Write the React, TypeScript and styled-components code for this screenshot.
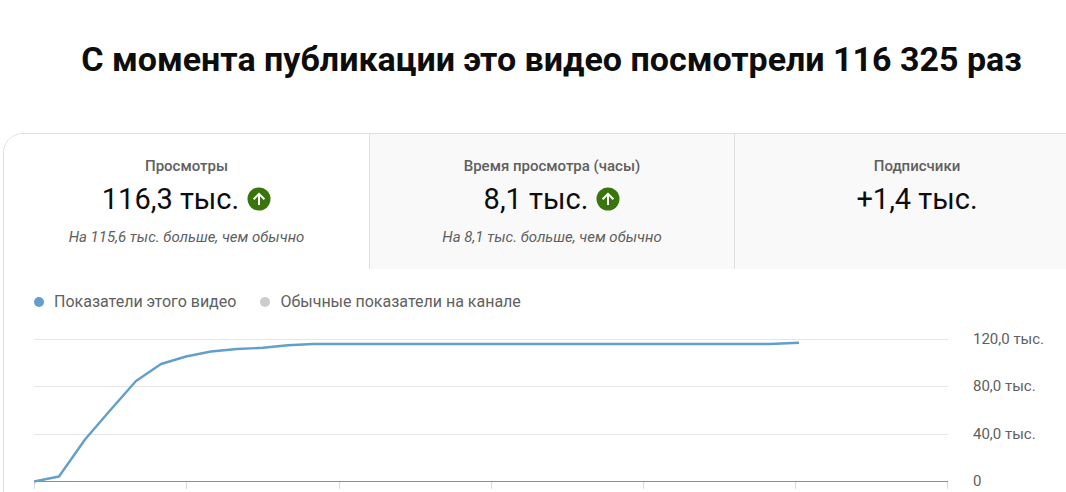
import React, { useState } from "react";
import styled, { createGlobalStyle } from "styled-components";

const GlobalStyle = createGlobalStyle`
  *, *::before, *::after { box-sizing: border-box; }
  body {
    margin: 0;
    background: #fff;
    color: #0d0d0d;
    font-family: Roboto, "Liberation Sans", sans-serif;
  }
`;

const Viewport = styled.main`
  overflow: hidden;
  max-height: 100vh;
`;

/* The report is a little wider than the window and is cut at its right edge. */
const Report = styled.div`
  width: calc(100% + 34px);
  padding-left: 3px;
`;

const Title = styled.h1`
  margin: 0;
  padding: 37px 0 52px;
  font-size: 34px;
  line-height: 44px;
  font-weight: 700;
  text-align: center;
  white-space: nowrap;
`;

const Card = styled.section`
  border: 1px solid #e0e0e0;
  border-radius: 20px;
  overflow: hidden;
`;

const Tabs = styled.div`
  display: grid;
  grid-template-columns: repeat(3, 1fr);
`;

const Tab = styled.button<{ $active: boolean }>`
  display: flex;
  flex-direction: column;
  align-items: center;
  height: 135px;
  margin: 0;
  padding: 22px 0 0;
  border: 0;
  font: inherit;
  color: inherit;
  cursor: pointer;
  background: ${(p) => (p.$active ? "#fff" : "#f9f9f9")};

  & + & {
    border-left: 1px solid #e0e0e0;
  }
`;

const TabLabel = styled.span`
  font-size: 15px;
  line-height: 20px;
  font-weight: 500;
  color: #606060;
`;

const TabValue = styled.span`
  display: flex;
  align-items: center;
  gap: 8px;
  margin-top: 3px;
  font-size: 29px;
  line-height: 40px;
  color: #0d0d0d;
`;

const TabNote = styled.span`
  margin-top: 8px;
  font-size: 15px;
  line-height: 20px;
  font-style: italic;
  color: #606060;
`;

const Legend = styled.ul`
  display: flex;
  gap: 24px;
  margin: 0;
  padding: 23px 30px 0;
  list-style: none;
`;

const LegendItem = styled.li<{ $color: string }>`
  display: flex;
  align-items: center;
  gap: 10px;
  font-size: 16px;
  line-height: 20px;
  color: #606060;

  &::before {
    content: "";
    width: 10px;
    height: 10px;
    border-radius: 50%;
    background: ${(p) => p.$color};
  }
`;

const Chart = styled.div`
  display: grid;
  grid-template-columns: 1fr 126px;
  column-gap: 25px;
  padding: 17px 0 20px 30px;
`;

const Plot = styled.svg`
  display: block;
  width: 100%;
  height: 162px;
`;

const Scale = styled.div`
  display: flex;
  flex-direction: column;
  justify-content: space-between;
  height: 162px;
  font-size: 15px;
  line-height: 20px;
  color: #606060;
`;

const UpIcon = () => (
  <svg width="24" height="24" viewBox="0 0 24 24" aria-hidden="true">
    <circle cx="12" cy="12" r="11.5" fill="#38760c" />
    <path
      d="M12 18V7M6.6 12.2 12 6.8l5.4 5.4"
      fill="none"
      stroke="#fff"
      strokeWidth="2"
    />
  </svg>
);

const tabs = [
  { label: "Просмотры", value: "116,3 тыс.", note: "На 115,6 тыс. больше, чем обычно" },
  { label: "Время просмотра (часы)", value: "8,1 тыс.", note: "На 8,1 тыс. больше, чем обычно" },
  { label: "Подписчики", value: "+1,4 тыс.", note: "" },
];

const gridRows = [10.5, 57.5, 105.5];
const ticks = [0.5, 152.5, 305.5, 457.5, 609.5, 761.5, 913.5];
const viewsLine =
  "0,152.5 25,147.5 51,110.5 76,81.5 102,52 127,35 152,27.5 177,22.5 203,20 229,18.8 254,16.2 279,15 736,15 765,13.7";

export default function App() {
  const [active, setActive] = useState(0);
  return (
    <Viewport>
      <GlobalStyle />
      <Report>
        <Title>С момента публикации это видео посмотрели 116 325 раз</Title>
        <Card>
          <Tabs role="tablist">
            {tabs.map((t, i) => (
              <Tab
                key={t.label}
                type="button"
                role="tab"
                aria-selected={i === active}
                $active={i === active}
                onClick={() => setActive(i)}
              >
                <TabLabel>{t.label}</TabLabel>
                <TabValue>
                  {t.value}
                  {t.note && <UpIcon />}
                </TabValue>
                {t.note && <TabNote>{t.note}</TabNote>}
              </Tab>
            ))}
          </Tabs>
          <Legend>
            <LegendItem $color="#629fca">Показатели этого видео</LegendItem>
            <LegendItem $color="#ccc">Обычные показатели на канале</LegendItem>
          </Legend>
          <Chart>
            <Plot viewBox="0 0 914 162" preserveAspectRatio="none" role="img" aria-label="Просмотры">
              {gridRows.map((y) => (
                <path key={y} d={`M0 ${y}H914`} stroke="#e6e6e6" vectorEffect="non-scaling-stroke" />
              ))}
              {ticks.map((x) => (
                <path key={x} d={`M${x} 153V160`} stroke="#dcdcdc" vectorEffect="non-scaling-stroke" />
              ))}
              <path d="M0 152.5H914" stroke="#8f8f8f" vectorEffect="non-scaling-stroke" />
              <polyline
                points={viewsLine}
                fill="none"
                stroke="#629fca"
                strokeWidth="2.4"
                strokeLinejoin="round"
                vectorEffect="non-scaling-stroke"
              />
            </Plot>
            <Scale>
              <span>120,0 тыс.</span>
              <span>80,0 тыс.</span>
              <span>40,0 тыс.</span>
              <span>0</span>
            </Scale>
          </Chart>
        </Card>
      </Report>
    </Viewport>
  );
}
